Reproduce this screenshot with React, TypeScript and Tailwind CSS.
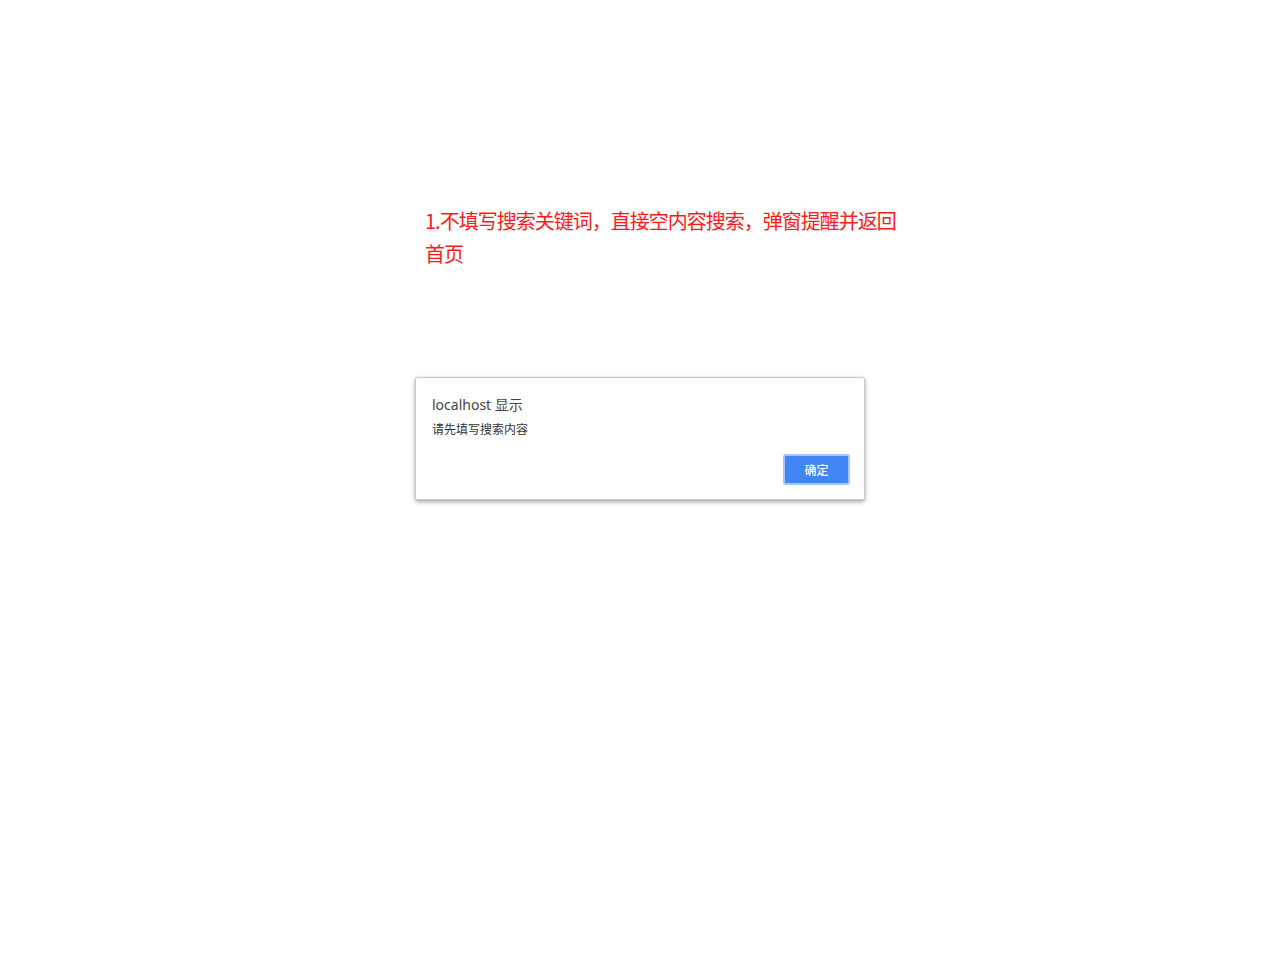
export default function App() {
  return (
    <div
      className="min-h-[958px] w-full bg-white"
      style={{ fontFamily: '"Microsoft YaHei", "Noto Sans CJK SC", sans-serif' }}
    >
      <div className="pt-[204px] pl-[425px]">
        <p className="w-[482px] text-[20px] leading-[33px] text-[#ff1a1a] tracking-[-1px]">
          1.不填写搜索关键词，直接空内容搜索，弹窗提醒并返回首页
        </p>
      </div>

      <div className="pl-[415px] pt-[107px]">
        <div className="w-[450px] h-[123px] rounded-[2px] border border-[#c8c8c8] bg-white shadow-[0_2px_4px_rgba(0,0,0,0.35)] flex flex-col pl-[16px] pr-[14px] pt-[18px]">
          <div className="text-[14px] leading-[18px] text-[#444]" style={{ fontFamily: '"Noto Sans", "Noto Sans CJK SC", sans-serif' }}>
            localhost 显示
          </div>
          <div className="mt-[7px] text-[12px] leading-[16px] text-[#333]">请先填写搜索内容</div>
          <div className="mt-auto mb-[14px] flex justify-end">
            <button className="w-[67px] h-[31px] rounded-[3px] border-2 border-[#a4c4fa] bg-[#4285f4] text-[12px] font-medium text-white">
              确定
            </button>
          </div>
        </div>
      </div>
    </div>
  );
}
